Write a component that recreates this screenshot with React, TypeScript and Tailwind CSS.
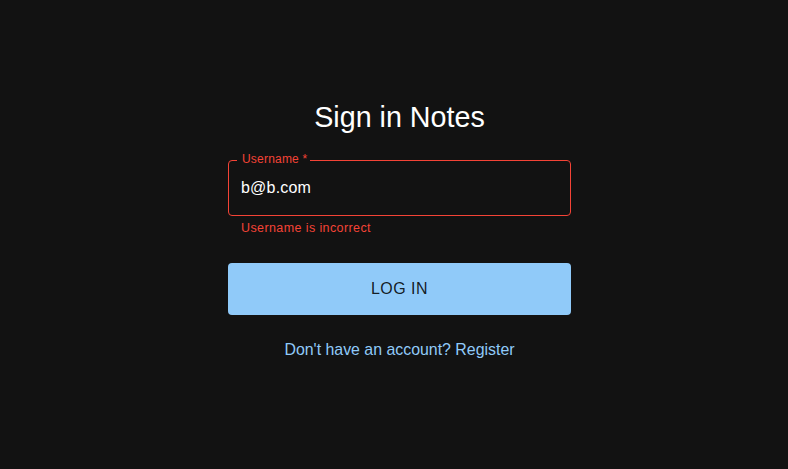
import React from "react";

export default function App() {
  return (
    <div
      className="w-[788px] h-[469px] bg-[#121212] flex flex-col items-center"
      style={{ fontFamily: '"Liberation Sans", Arial, sans-serif' }}
    >
      <div className="w-[343px] ml-[11px] mt-[99px] flex flex-col items-center">
        <h1 className="text-[28.7px] leading-[36px] text-white">Sign in Notes</h1>
        <div className="relative w-full h-[56px] mt-[25px]">
          <fieldset className="absolute inset-0 -top-[5px] border border-[#f44336] rounded-[4px] px-[8px] m-0">
            <legend className="text-[12px] leading-[11px] px-[5px] invisible">Username *</legend>
          </fieldset>
          <label className="absolute left-[14px] -top-[8px] text-[12px] tracking-[0.2px] leading-[14px] text-[#f44336]">
            Username *
          </label>
          <div className="absolute left-[13px] top-[18px] text-[16px] tracking-[0.2px] leading-[20px] text-white">
            b@b.com
          </div>
        </div>
        <div className="w-full pl-[13px] mt-[4px] text-[12.5px] tracking-[0.4px] leading-[16px] text-[#f44336]">
          Username is incorrect
        </div>
        <button className="w-full h-[52px] mt-[27px] rounded-[4px] bg-[#90caf9] text-[rgba(0,0,0,0.87)] text-[16px] tracking-[0.5px] uppercase">
          Log in
        </button>
        <a className="mt-[25px] text-[15.9px] leading-[20px] text-[#90caf9]">
          Don't have an account? Register
        </a>
      </div>
    </div>
  );
}
